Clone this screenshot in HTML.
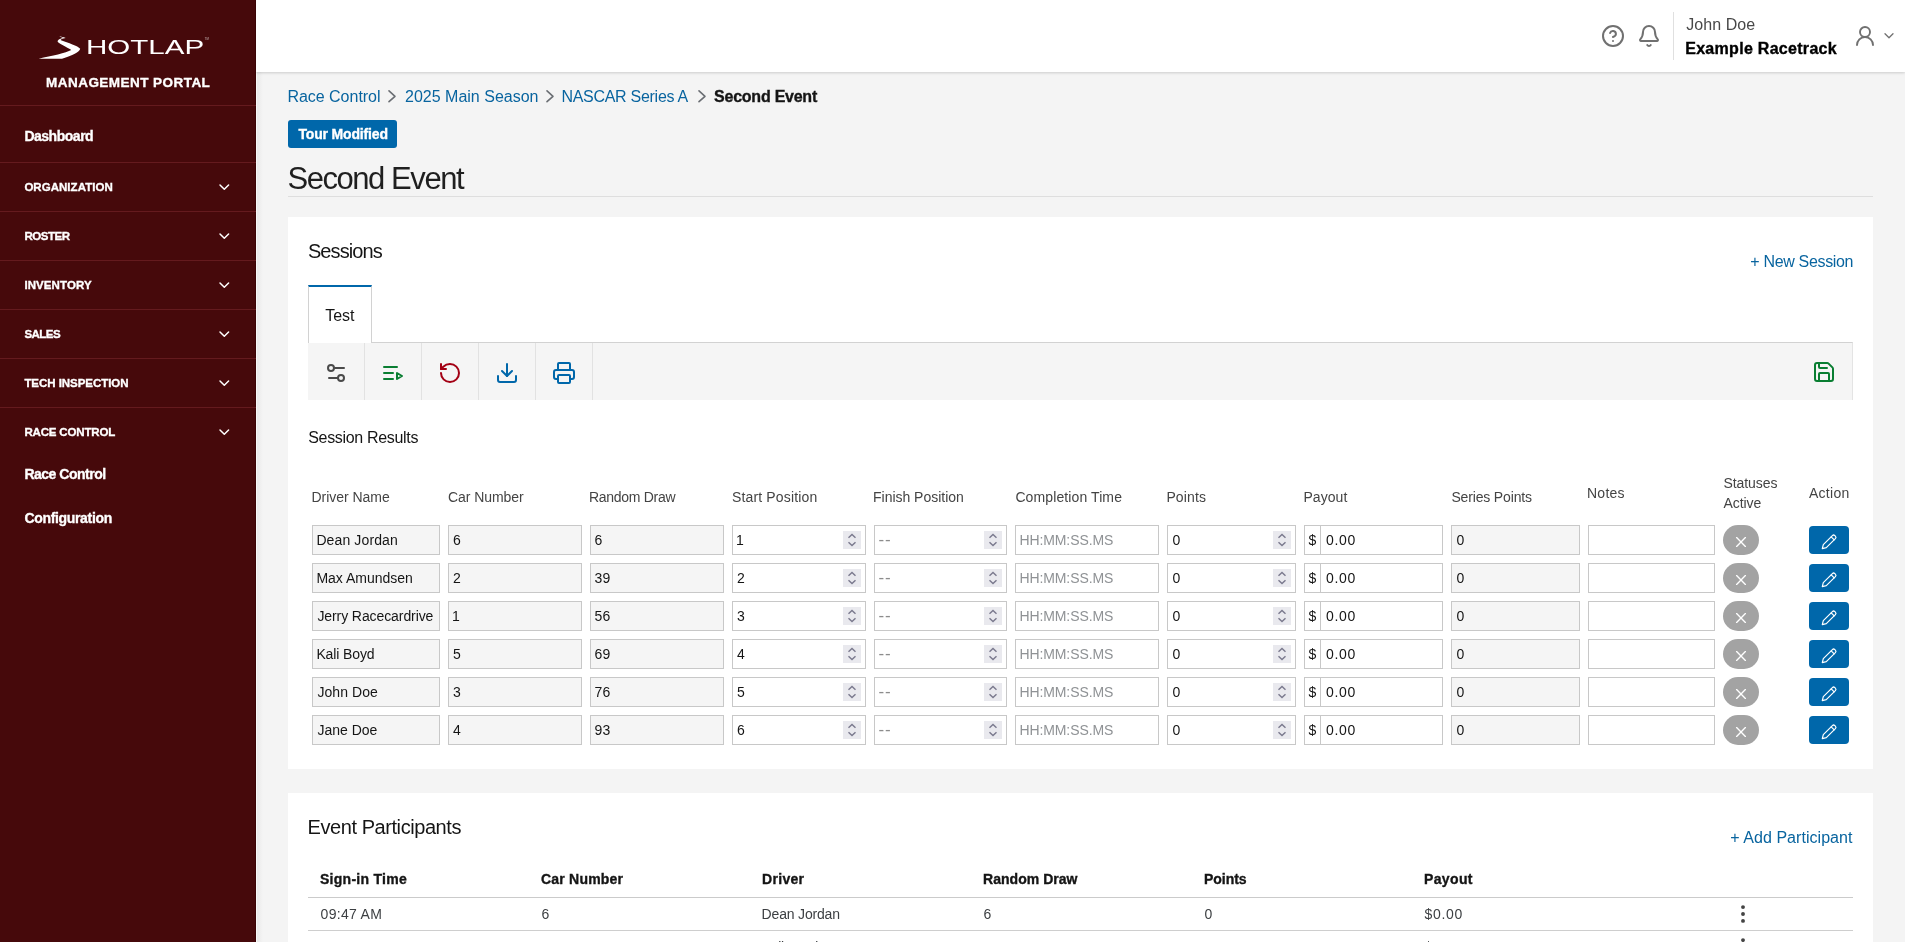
<!DOCTYPE html>
<html lang="en">
<head>
<meta charset="utf-8">
<title>Second Event - Hotlap Management Portal</title>
<style>
*{box-sizing:border-box;margin:0;padding:0}
html,body{width:1905px;height:942px;overflow:hidden;background:#f4f4f4;will-change:transform;font-family:"Liberation Sans",sans-serif;color:#151515}
.t{position:absolute;white-space:nowrap}
.a{position:absolute}
svg{position:absolute;overflow:visible}
#side{position:absolute;left:0;top:0;width:256px;height:942px;background:#46090b;box-shadow:inset -1px 0 0 #3a0305}
#side .t{color:#fff}
.hr{position:absolute;left:0;width:256px;height:1px;background:#641a1e}
#top{position:absolute;left:256px;top:0;width:1649px;height:72px;background:#fff;box-shadow:0 1px 2px rgba(0,0,0,.11),0 2px 3px rgba(0,0,0,.04)}
.card{position:absolute;left:288px;width:1585px;background:#fff}
.link{color:#08649f}
.in{position:absolute;height:30px;border:1px solid #c8c8c8;border-radius:0;background:#fff}
.in.dis{background:#f5f5f5}
.spin{position:absolute;width:18px;height:18px;top:5px;background:#e9e9ee}
.st{position:absolute;width:36px;height:30px;border-radius:15px;background:#a3a3a3}
.act{position:absolute;width:40px;height:28px;border-radius:4px;background:#0067aa}
.h{color:#444}
.ph{color:#8f9295}
.xb{-webkit-text-stroke:.35px currentColor}
</style>
</head>
<body>
<div class="a" style="left:256px;top:72px;width:7px;height:870px;background:linear-gradient(to right,#f7f8f8 0,#f7f8f8 1px,#e9e9e9 1px,#f4f4f4 7px)"></div>
<div id="top"></div>
<svg style="left:1600.8px;top:23.7px" width="24" height="24" viewBox="0 0 24 24" fill="none" stroke="#707070" stroke-width="2" stroke-linecap="round" stroke-linejoin="round"><circle cx="12" cy="12" r="10"/><path d="M9.090 9a3 3 0 0 1 5.830 1c0 2-3 3-3 3"/><path d="M12 17h.010"/></svg>
<svg style="left:1637.1px;top:24.4px" width="24" height="24" viewBox="0 0 24 24" fill="none" stroke="#707070" stroke-width="2" stroke-linecap="round" stroke-linejoin="round"><path d="M10.268 21a2 2 0 0 0 3.464 0"/><path d="M3.262 15.326A1 1 0 0 0 4 17h16a1 1 0 0 0 .740-1.673C19.410 13.956 18 12.499 18 8A6 6 0 0 0 6 8c0 4.499-1.411 5.956-2.738 7.326"/></svg>
<div class="a" style="left:1673px;top:12px;width:1px;height:48px;background:#e0e0e0"></div>
<div id="t1" class="t " style="top:14.36px;font-size:16px;line-height:21px;left:1686.20px;color:#484848;letter-spacing:0.072px;">John Doe</div>
<div id="t2" class="t xb" style="top:38.16px;font-size:16px;line-height:21px;left:1685.20px;font-weight:700;color:#000;letter-spacing:0.296px;">Example Racetrack</div>
<svg style="left:1853px;top:24px" width="24" height="24" viewBox="0 0 24 24" fill="none" stroke="#707070" stroke-width="1.9" stroke-linecap="round" stroke-linejoin="round"><circle cx="12" cy="8" r="5"/><path d="M20 21a8 8 0 0 0-16 0"/></svg>
<svg style="left:1884px;top:33px" width="10" height="6" viewBox="0 0 10 6" fill="none" stroke="#707070" stroke-width="1.300" stroke-linecap="round" stroke-linejoin="round"><path d="M1 .8l4 4 4-4"/></svg>
<div id="side">
<svg style="left:0;top:0" width="256" height="105" viewBox="0 0 256 105"><path fill="#fff" d="M38.6 58.7L62 58.7C72.500 55.600 79.600 52.300 80.200 48.800C78 45.800 68 43 61 40.300C59.800 39.500 62.600 38.300 65.700 37.900C63.200 36.900 61 36.400 59.200 36.400C61.400 37.100 63.200 37.600 62.600 38.100C58.200 39.300 56.600 41.100 58.400 42.600C63 45.800 68.800 48.200 71.300 50.100C66 53 52 56 38.600 58.700Z"/></svg>
<div id="brand" class="t" style="left:85.6px;top:34px;font-size:19.5px;line-height:26px;transform-origin:0 50%;transform:scaleX(1.515);color:#fff">HOTLAP</div>
<div class="t" style="left:204.8px;top:38px;font-size:2.8px;line-height:3px;color:#cdbcbc;letter-spacing:.1px">TM</div>
<div id="t3" class="t xb" style="top:74.32px;font-size:13.5px;line-height:18px;left:46.10px;font-weight:700;letter-spacing:0.454px;">MANAGEMENT PORTAL</div>
<div class="hr" style="top:105px"></div>
<div class="hr" style="top:162px"></div>
<div class="hr" style="top:211px"></div>
<div class="hr" style="top:260px"></div>
<div class="hr" style="top:309px"></div>
<div class="hr" style="top:358px"></div>
<div class="hr" style="top:407px"></div>
<div id="t4" class="t xb" style="top:126.75px;font-size:14px;line-height:18px;left:24.40px;font-weight:700;letter-spacing:-0.484px;">Dashboard</div>
<div id="t5" class="t xb" style="top:179.52px;font-size:11.5px;line-height:15px;left:24.40px;font-weight:700;letter-spacing:0.033px;">ORGANIZATION</div>
<svg style="left:219px;top:183.8px" width="11" height="7" viewBox="0 0 11 7" fill="none" stroke="#fff" stroke-width="1.500" stroke-linecap="round" stroke-linejoin="round"><path d="M1 1l4.300 4.300L9.600 1"/></svg>
<div id="t6" class="t xb" style="top:228.52px;font-size:11.5px;line-height:15px;left:24.40px;font-weight:700;letter-spacing:-0.443px;">ROSTER</div>
<svg style="left:219px;top:232.8px" width="11" height="7" viewBox="0 0 11 7" fill="none" stroke="#fff" stroke-width="1.500" stroke-linecap="round" stroke-linejoin="round"><path d="M1 1l4.300 4.300L9.600 1"/></svg>
<div id="t7" class="t xb" style="top:277.52px;font-size:11.5px;line-height:15px;left:24.40px;font-weight:700;letter-spacing:0.089px;">INVENTORY</div>
<svg style="left:219px;top:281.8px" width="11" height="7" viewBox="0 0 11 7" fill="none" stroke="#fff" stroke-width="1.500" stroke-linecap="round" stroke-linejoin="round"><path d="M1 1l4.300 4.300L9.600 1"/></svg>
<div id="t8" class="t xb" style="top:326.52px;font-size:11.5px;line-height:15px;left:24.40px;font-weight:700;letter-spacing:-0.518px;">SALES</div>
<svg style="left:219px;top:330.8px" width="11" height="7" viewBox="0 0 11 7" fill="none" stroke="#fff" stroke-width="1.500" stroke-linecap="round" stroke-linejoin="round"><path d="M1 1l4.300 4.300L9.600 1"/></svg>
<div id="t9" class="t xb" style="top:375.52px;font-size:11.5px;line-height:15px;left:24.40px;font-weight:700;letter-spacing:-0.049px;">TECH INSPECTION</div>
<svg style="left:219px;top:379.8px" width="11" height="7" viewBox="0 0 11 7" fill="none" stroke="#fff" stroke-width="1.500" stroke-linecap="round" stroke-linejoin="round"><path d="M1 1l4.300 4.300L9.600 1"/></svg>
<div id="t10" class="t xb" style="top:424.52px;font-size:11.5px;line-height:15px;left:24.40px;font-weight:700;letter-spacing:-0.165px;">RACE CONTROL</div>
<svg style="left:219px;top:428.8px" width="11" height="7" viewBox="0 0 11 7" fill="none" stroke="#fff" stroke-width="1.500" stroke-linecap="round" stroke-linejoin="round"><path d="M1 1l4.300 4.300L9.600 1"/></svg>
<div id="t11" class="t xb" style="top:464.95px;font-size:14px;line-height:18px;left:24.40px;font-weight:700;letter-spacing:-0.485px;">Race Control</div>
<div id="t12" class="t xb" style="top:509.15px;font-size:14px;line-height:18px;left:24.40px;font-weight:700;letter-spacing:-0.326px;">Configuration</div>
</div>
<div id="t13" class="t link" style="top:85.96px;font-size:16px;line-height:21px;left:287.40px;letter-spacing:-0.020px;">Race Control</div>
<svg style="left:388px;top:90.400px" width="8" height="13" viewBox="0 0 8 13" fill="none" stroke="#6a6e73" stroke-width="1.600" stroke-linecap="round" stroke-linejoin="round"><path d="M1 .9l6 5.400-6 5.400"/></svg>
<div id="t14" class="t link" style="top:85.96px;font-size:16px;line-height:21px;left:405.00px;letter-spacing:0.005px;">2025 Main Season</div>
<svg style="left:546px;top:90.400px" width="8" height="13" viewBox="0 0 8 13" fill="none" stroke="#6a6e73" stroke-width="1.600" stroke-linecap="round" stroke-linejoin="round"><path d="M1 .9l6 5.400-6 5.400"/></svg>
<div id="t15" class="t link" style="top:85.96px;font-size:16px;line-height:21px;left:561.40px;letter-spacing:-0.280px;">NASCAR Series A</div>
<svg style="left:698px;top:90.400px" width="8" height="13" viewBox="0 0 8 13" fill="none" stroke="#6a6e73" stroke-width="1.600" stroke-linecap="round" stroke-linejoin="round"><path d="M1 .9l6 5.400-6 5.400"/></svg>
<div id="t16" class="t xb" style="top:85.96px;font-size:16px;line-height:21px;left:714.10px;font-weight:700;letter-spacing:-0.243px;">Second Event</div>
<div class="a" style="left:288px;top:120px;width:109px;height:28px;border-radius:3px;background:#0067aa"></div>
<div id="t17" class="t xb" style="top:125.15px;font-size:14px;line-height:18px;left:298.40px;font-weight:700;color:#fff;letter-spacing:-0.162px;">Tour Modified</div>
<div id="t18" class="t " style="top:158.66px;font-size:31px;line-height:40px;left:287.40px;color:#1f1f1f;letter-spacing:-1.437px;">Second Event</div>
<div class="a" style="left:288px;top:196px;width:1585px;height:1px;background:#dedede"></div>
<div class="card" style="top:217px;height:552px"></div>
<div id="t19" class="t " style="top:238.07px;font-size:20px;line-height:26px;left:307.90px;letter-spacing:-0.907px;">Sessions</div>
<div id="t20" class="t link" style="top:251.16px;font-size:16px;line-height:21px;right:51.83px;letter-spacing:-0.330px;">+ New Session</div>
<div class="a" style="left:308px;top:285px;width:64px;height:58px;border:1px solid #d2d2d2;border-top:2px solid #0067aa;border-bottom:0;background:#fff"></div>
<div id="t21" class="t " style="top:305.06px;font-size:16px;line-height:21px;left:325.20px;letter-spacing:-0.033px;">Test</div>
<div class="a" style="left:308px;top:342px;width:1545px;height:58px;background:#f5f5f5;border-top:1px solid #d2d2d2;border-right:1px solid #e4e4e4"></div>
<div class="a" style="left:309px;top:342px;width:62px;height:1px;background:#fff"></div>
<div class="a" style="left:364px;top:343px;width:1px;height:57px;background:#e2e2e2"></div>
<div class="a" style="left:421px;top:343px;width:1px;height:57px;background:#e2e2e2"></div>
<div class="a" style="left:478px;top:343px;width:1px;height:57px;background:#e2e2e2"></div>
<div class="a" style="left:535px;top:343px;width:1px;height:57px;background:#e2e2e2"></div>
<div class="a" style="left:592px;top:343px;width:1px;height:57px;background:#e2e2e2"></div>
<svg style="left:324px;top:361px" width="24" height="24" viewBox="0 0 24 24" fill="none" stroke="#4a4a4a" stroke-width="2" stroke-linecap="round" stroke-linejoin="round"><path d="M20 7h-9"/><path d="M14 17H5"/><circle cx="17" cy="17" r="3"/><circle cx="7" cy="7" r="3"/></svg>
<svg style="left:381px;top:361px" width="24" height="24" viewBox="0 0 24 24" fill="none" stroke="#0a7e32" stroke-width="2" stroke-linecap="round" stroke-linejoin="round"><path d="M12 12H3"/><path d="M16 6H3"/><path d="M12 18H3"/><path d="m16 12 5 3-5 3v-6Z"/></svg>
<svg style="left:438px;top:361px" width="24" height="24" viewBox="0 0 24 24" fill="none" stroke="#a30014" stroke-width="2" stroke-linecap="round" stroke-linejoin="round"><path d="M3 12a9 9 0 1 0 9-9 9.750 9.750 0 0 0-6.740 2.740L3 8"/><path d="M3 3v5h5"/></svg>
<svg style="left:495px;top:361px" width="24" height="24" viewBox="0 0 24 24" fill="none" stroke="#0067aa" stroke-width="2" stroke-linecap="round" stroke-linejoin="round"><path d="M21 15v4a2 2 0 0 1-2 2H5a2 2 0 0 1-2-2v-4"/><path d="M7 10l5 5 5-5"/><path d="M12 15V3"/></svg>
<svg style="left:552px;top:361px" width="24" height="24" viewBox="0 0 24 24" fill="none" stroke="#0067aa" stroke-width="2" stroke-linecap="round" stroke-linejoin="round"><path d="M6 18H4a2 2 0 0 1-2-2v-5a2 2 0 0 1 2-2h16a2 2 0 0 1 2 2v5a2 2 0 0 1-2 2h-2"/><path d="M6 9V3a1 1 0 0 1 1-1h10a1 1 0 0 1 1 1v6"/><rect x="6" y="14" width="12" height="8" rx="1"/></svg>
<svg style="left:1812px;top:360px" width="24" height="24" viewBox="0 0 24 24" fill="none" stroke="#0a7e32" stroke-width="2" stroke-linecap="round" stroke-linejoin="round"><path d="M15.200 3a2 2 0 0 1 1.400.600l3.800 3.800a2 2 0 0 1 .600 1.400V19a2 2 0 0 1-2 2H5a2 2 0 0 1-2-2V5a2 2 0 0 1 2-2z"/><path d="M17 21v-7a1 1 0 0 0-1-1H8a1 1 0 0 0-1 1v7"/><path d="M7 3v4a1 1 0 0 0 1 1h7"/></svg>
<div id="t22" class="t " style="top:426.86px;font-size:16px;line-height:21px;left:308.20px;letter-spacing:-0.316px;">Session Results</div>
<div id="t23" class="t h" style="top:488.15px;font-size:14px;line-height:18px;left:311.40px;letter-spacing:-0.018px;">Driver Name</div>
<div id="t24" class="t h" style="top:488.15px;font-size:14px;line-height:18px;left:448.00px;letter-spacing:-0.064px;">Car Number</div>
<div id="t25" class="t h" style="top:488.15px;font-size:14px;line-height:18px;left:589.00px;letter-spacing:-0.297px;">Random Draw</div>
<div id="t26" class="t h" style="top:488.15px;font-size:14px;line-height:18px;left:732.00px;letter-spacing:0.148px;">Start Position</div>
<div id="t27" class="t h" style="top:488.15px;font-size:14px;line-height:18px;left:873.00px;letter-spacing:-0.018px;">Finish Position</div>
<div id="t28" class="t h" style="top:488.15px;font-size:14px;line-height:18px;left:1015.40px;letter-spacing:0.107px;">Completion Time</div>
<div id="t29" class="t h" style="top:488.15px;font-size:14px;line-height:18px;left:1166.40px;letter-spacing:0.138px;">Points</div>
<div id="t30" class="t h" style="top:488.15px;font-size:14px;line-height:18px;left:1303.40px;letter-spacing:0.061px;">Payout</div>
<div id="t31" class="t h" style="top:488.15px;font-size:14px;line-height:18px;left:1451.40px;letter-spacing:-0.157px;">Series Points</div>
<div id="t32" class="t h" style="top:484.15px;font-size:14px;line-height:18px;left:1587.00px;letter-spacing:0.257px;">Notes</div>
<div id="t33" class="t h" style="top:474.15px;font-size:14px;line-height:18px;left:1723.40px;letter-spacing:-0.068px;">Statuses</div>
<div id="t34" class="t h" style="top:494.15px;font-size:14px;line-height:18px;left:1723.40px;letter-spacing:-0.028px;">Active</div>
<div id="t35" class="t h" style="top:484.15px;font-size:14px;line-height:18px;left:1808.90px;letter-spacing:0.295px;">Action</div>
<div class="in dis" style="left:312px;top:525px;width:128px"></div>
<div id="t36" class="t " style="top:531.15px;font-size:14px;line-height:18px;left:316.40px;letter-spacing:0.122px;">Dean Jordan</div>
<div class="in dis" style="left:448px;top:525px;width:134px"></div>
<div id="t37" class="t " style="top:531.15px;font-size:14px;line-height:18px;left:453.00px;">6</div>
<div class="in dis" style="left:590px;top:525px;width:134px"></div>
<div id="t38" class="t " style="top:531.15px;font-size:14px;line-height:18px;left:594.60px;">6</div>
<div class="in" style="left:732px;top:525px;width:134px"><div class="spin" style="left:110px"><svg style="left:5px;top:2px" width="8" height="14" viewBox="0 0 8 14" fill="none" stroke="#7b7a8e" stroke-width="1.450" stroke-linejoin="miter"><path d="M.5 4.700L4 1.400l3.500 3.300"/><path d="M.5 9.300L4 12.600l3.500-3.300"/></svg></div></div>
<div id="t39" class="t " style="top:531.15px;font-size:14px;line-height:18px;left:736.00px;">1</div>
<div class="in" style="left:874px;top:525px;width:133px"><div class="spin" style="left:109px"><svg style="left:5px;top:2px" width="8" height="14" viewBox="0 0 8 14" fill="none" stroke="#7b7a8e" stroke-width="1.450" stroke-linejoin="miter"><path d="M.5 4.700L4 1.400l3.500 3.300"/><path d="M.5 9.300L4 12.600l3.500-3.300"/></svg></div></div>
<div id="t40" class="t ph" style="top:528.91px;font-size:17px;line-height:22px;left:878.60px;color:#8c8c8c;letter-spacing:0.739px;">--</div>
<div class="in" style="left:1015px;top:525px;width:144px"></div>
<div id="t41" class="t ph" style="top:531.15px;font-size:14px;line-height:18px;left:1019.40px;letter-spacing:-0.095px;">HH:MM:SS.MS</div>
<div class="in" style="left:1167px;top:525px;width:129px"><div class="spin" style="left:105px"><svg style="left:5px;top:2px" width="8" height="14" viewBox="0 0 8 14" fill="none" stroke="#7b7a8e" stroke-width="1.450" stroke-linejoin="miter"><path d="M.5 4.700L4 1.400l3.500 3.300"/><path d="M.5 9.300L4 12.600l3.500-3.300"/></svg></div></div>
<div id="t42" class="t " style="top:531.15px;font-size:14px;line-height:18px;left:1172.60px;">0</div>
<div class="in" style="left:1304px;top:525px;width:139px"><div class="a" style="left:15px;top:0;width:1px;height:28px;background:#c8c8c8"></div></div>
<div id="t43" class="t " style="top:531.15px;font-size:14px;line-height:18px;left:1308.60px;">$</div>
<div id="t44" class="t " style="top:531.15px;font-size:14px;line-height:18px;left:1326.00px;letter-spacing:0.646px;">0.00</div>
<div class="in dis" style="left:1451px;top:525px;width:129px"></div>
<div id="t45" class="t " style="top:531.15px;font-size:14px;line-height:18px;left:1456.60px;">0</div>
<div class="in" style="left:1588px;top:525px;width:127px"></div>
<div class="st" style="left:1723px;top:525px"><svg style="left:13px;top:12.200px" width="10" height="10" viewBox="0 0 10 10" fill="none" stroke="#fff" stroke-width="1.350" stroke-linecap="round"><path d="M.6.600l8.800 8.800M9.400.600L.6 9.400"/></svg></div>
<div class="act" style="left:1809px;top:526px"><svg style="left:12px;top:8px" width="16" height="16" viewBox="0 0 16 16" fill="none" stroke="#fff" stroke-width="1.200" stroke-linecap="round" stroke-linejoin="round"><path d="M1.300 14.700l1-4L11.400 1.600a1.700 1.700 0 0 1 2.400 0l.6.600a1.700 1.700 0 0 1 0 2.400L5.300 13.700z"/><path d="M10.200 2.800l3 3"/></svg></div>
<div class="in dis" style="left:312px;top:563px;width:128px"></div>
<div id="t46" class="t " style="top:569.15px;font-size:14px;line-height:18px;left:316.40px;letter-spacing:-0.007px;">Max Amundsen</div>
<div class="in dis" style="left:448px;top:563px;width:134px"></div>
<div id="t47" class="t " style="top:569.15px;font-size:14px;line-height:18px;left:453.00px;">2</div>
<div class="in dis" style="left:590px;top:563px;width:134px"></div>
<div id="t48" class="t " style="top:569.15px;font-size:14px;line-height:18px;left:594.60px;">39</div>
<div class="in" style="left:732px;top:563px;width:134px"><div class="spin" style="left:110px"><svg style="left:5px;top:2px" width="8" height="14" viewBox="0 0 8 14" fill="none" stroke="#7b7a8e" stroke-width="1.450" stroke-linejoin="miter"><path d="M.5 4.700L4 1.400l3.500 3.300"/><path d="M.5 9.300L4 12.600l3.500-3.300"/></svg></div></div>
<div id="t49" class="t " style="top:569.15px;font-size:14px;line-height:18px;left:737.00px;">2</div>
<div class="in" style="left:874px;top:563px;width:133px"><div class="spin" style="left:109px"><svg style="left:5px;top:2px" width="8" height="14" viewBox="0 0 8 14" fill="none" stroke="#7b7a8e" stroke-width="1.450" stroke-linejoin="miter"><path d="M.5 4.700L4 1.400l3.500 3.300"/><path d="M.5 9.300L4 12.600l3.500-3.300"/></svg></div></div>
<div id="t50" class="t ph" style="top:566.91px;font-size:17px;line-height:22px;left:878.60px;color:#8c8c8c;letter-spacing:0.739px;">--</div>
<div class="in" style="left:1015px;top:563px;width:144px"></div>
<div id="t51" class="t ph" style="top:569.15px;font-size:14px;line-height:18px;left:1019.40px;letter-spacing:-0.095px;">HH:MM:SS.MS</div>
<div class="in" style="left:1167px;top:563px;width:129px"><div class="spin" style="left:105px"><svg style="left:5px;top:2px" width="8" height="14" viewBox="0 0 8 14" fill="none" stroke="#7b7a8e" stroke-width="1.450" stroke-linejoin="miter"><path d="M.5 4.700L4 1.400l3.500 3.300"/><path d="M.5 9.300L4 12.600l3.500-3.300"/></svg></div></div>
<div id="t52" class="t " style="top:569.15px;font-size:14px;line-height:18px;left:1172.60px;">0</div>
<div class="in" style="left:1304px;top:563px;width:139px"><div class="a" style="left:15px;top:0;width:1px;height:28px;background:#c8c8c8"></div></div>
<div id="t53" class="t " style="top:569.15px;font-size:14px;line-height:18px;left:1308.60px;">$</div>
<div id="t54" class="t " style="top:569.15px;font-size:14px;line-height:18px;left:1326.00px;letter-spacing:0.646px;">0.00</div>
<div class="in dis" style="left:1451px;top:563px;width:129px"></div>
<div id="t55" class="t " style="top:569.15px;font-size:14px;line-height:18px;left:1456.60px;">0</div>
<div class="in" style="left:1588px;top:563px;width:127px"></div>
<div class="st" style="left:1723px;top:563px"><svg style="left:13px;top:12.200px" width="10" height="10" viewBox="0 0 10 10" fill="none" stroke="#fff" stroke-width="1.350" stroke-linecap="round"><path d="M.6.600l8.800 8.800M9.400.600L.6 9.400"/></svg></div>
<div class="act" style="left:1809px;top:564px"><svg style="left:12px;top:8px" width="16" height="16" viewBox="0 0 16 16" fill="none" stroke="#fff" stroke-width="1.200" stroke-linecap="round" stroke-linejoin="round"><path d="M1.300 14.700l1-4L11.400 1.600a1.700 1.700 0 0 1 2.400 0l.6.600a1.700 1.700 0 0 1 0 2.400L5.300 13.700z"/><path d="M10.200 2.800l3 3"/></svg></div>
<div class="in dis" style="left:312px;top:601px;width:128px"></div>
<div id="t56" class="t " style="top:607.15px;font-size:14px;line-height:18px;left:317.40px;letter-spacing:-0.088px;">Jerry Racecardrive</div>
<div class="in dis" style="left:448px;top:601px;width:134px"></div>
<div id="t57" class="t " style="top:607.15px;font-size:14px;line-height:18px;left:452.00px;">1</div>
<div class="in dis" style="left:590px;top:601px;width:134px"></div>
<div id="t58" class="t " style="top:607.15px;font-size:14px;line-height:18px;left:594.60px;">56</div>
<div class="in" style="left:732px;top:601px;width:134px"><div class="spin" style="left:110px"><svg style="left:5px;top:2px" width="8" height="14" viewBox="0 0 8 14" fill="none" stroke="#7b7a8e" stroke-width="1.450" stroke-linejoin="miter"><path d="M.5 4.700L4 1.400l3.500 3.300"/><path d="M.5 9.300L4 12.600l3.500-3.300"/></svg></div></div>
<div id="t59" class="t " style="top:607.15px;font-size:14px;line-height:18px;left:737.00px;">3</div>
<div class="in" style="left:874px;top:601px;width:133px"><div class="spin" style="left:109px"><svg style="left:5px;top:2px" width="8" height="14" viewBox="0 0 8 14" fill="none" stroke="#7b7a8e" stroke-width="1.450" stroke-linejoin="miter"><path d="M.5 4.700L4 1.400l3.500 3.300"/><path d="M.5 9.300L4 12.600l3.500-3.300"/></svg></div></div>
<div id="t60" class="t ph" style="top:604.91px;font-size:17px;line-height:22px;left:878.60px;color:#8c8c8c;letter-spacing:0.739px;">--</div>
<div class="in" style="left:1015px;top:601px;width:144px"></div>
<div id="t61" class="t ph" style="top:607.15px;font-size:14px;line-height:18px;left:1019.40px;letter-spacing:-0.095px;">HH:MM:SS.MS</div>
<div class="in" style="left:1167px;top:601px;width:129px"><div class="spin" style="left:105px"><svg style="left:5px;top:2px" width="8" height="14" viewBox="0 0 8 14" fill="none" stroke="#7b7a8e" stroke-width="1.450" stroke-linejoin="miter"><path d="M.5 4.700L4 1.400l3.500 3.300"/><path d="M.5 9.300L4 12.600l3.500-3.300"/></svg></div></div>
<div id="t62" class="t " style="top:607.15px;font-size:14px;line-height:18px;left:1172.60px;">0</div>
<div class="in" style="left:1304px;top:601px;width:139px"><div class="a" style="left:15px;top:0;width:1px;height:28px;background:#c8c8c8"></div></div>
<div id="t63" class="t " style="top:607.15px;font-size:14px;line-height:18px;left:1308.60px;">$</div>
<div id="t64" class="t " style="top:607.15px;font-size:14px;line-height:18px;left:1326.00px;letter-spacing:0.646px;">0.00</div>
<div class="in dis" style="left:1451px;top:601px;width:129px"></div>
<div id="t65" class="t " style="top:607.15px;font-size:14px;line-height:18px;left:1456.60px;">0</div>
<div class="in" style="left:1588px;top:601px;width:127px"></div>
<div class="st" style="left:1723px;top:601px"><svg style="left:13px;top:12.200px" width="10" height="10" viewBox="0 0 10 10" fill="none" stroke="#fff" stroke-width="1.350" stroke-linecap="round"><path d="M.6.600l8.800 8.800M9.400.600L.6 9.400"/></svg></div>
<div class="act" style="left:1809px;top:602px"><svg style="left:12px;top:8px" width="16" height="16" viewBox="0 0 16 16" fill="none" stroke="#fff" stroke-width="1.200" stroke-linecap="round" stroke-linejoin="round"><path d="M1.300 14.700l1-4L11.400 1.600a1.700 1.700 0 0 1 2.400 0l.6.600a1.700 1.700 0 0 1 0 2.400L5.300 13.700z"/><path d="M10.200 2.800l3 3"/></svg></div>
<div class="in dis" style="left:312px;top:639px;width:128px"></div>
<div id="t66" class="t " style="top:645.15px;font-size:14px;line-height:18px;left:316.40px;letter-spacing:-0.120px;">Kali Boyd</div>
<div class="in dis" style="left:448px;top:639px;width:134px"></div>
<div id="t67" class="t " style="top:645.15px;font-size:14px;line-height:18px;left:453.00px;">5</div>
<div class="in dis" style="left:590px;top:639px;width:134px"></div>
<div id="t68" class="t " style="top:645.15px;font-size:14px;line-height:18px;left:594.60px;">69</div>
<div class="in" style="left:732px;top:639px;width:134px"><div class="spin" style="left:110px"><svg style="left:5px;top:2px" width="8" height="14" viewBox="0 0 8 14" fill="none" stroke="#7b7a8e" stroke-width="1.450" stroke-linejoin="miter"><path d="M.5 4.700L4 1.400l3.500 3.300"/><path d="M.5 9.300L4 12.600l3.500-3.300"/></svg></div></div>
<div id="t69" class="t " style="top:645.15px;font-size:14px;line-height:18px;left:737.00px;">4</div>
<div class="in" style="left:874px;top:639px;width:133px"><div class="spin" style="left:109px"><svg style="left:5px;top:2px" width="8" height="14" viewBox="0 0 8 14" fill="none" stroke="#7b7a8e" stroke-width="1.450" stroke-linejoin="miter"><path d="M.5 4.700L4 1.400l3.500 3.300"/><path d="M.5 9.300L4 12.600l3.500-3.300"/></svg></div></div>
<div id="t70" class="t ph" style="top:642.91px;font-size:17px;line-height:22px;left:878.60px;color:#8c8c8c;letter-spacing:0.739px;">--</div>
<div class="in" style="left:1015px;top:639px;width:144px"></div>
<div id="t71" class="t ph" style="top:645.15px;font-size:14px;line-height:18px;left:1019.40px;letter-spacing:-0.095px;">HH:MM:SS.MS</div>
<div class="in" style="left:1167px;top:639px;width:129px"><div class="spin" style="left:105px"><svg style="left:5px;top:2px" width="8" height="14" viewBox="0 0 8 14" fill="none" stroke="#7b7a8e" stroke-width="1.450" stroke-linejoin="miter"><path d="M.5 4.700L4 1.400l3.500 3.300"/><path d="M.5 9.300L4 12.600l3.500-3.300"/></svg></div></div>
<div id="t72" class="t " style="top:645.15px;font-size:14px;line-height:18px;left:1172.60px;">0</div>
<div class="in" style="left:1304px;top:639px;width:139px"><div class="a" style="left:15px;top:0;width:1px;height:28px;background:#c8c8c8"></div></div>
<div id="t73" class="t " style="top:645.15px;font-size:14px;line-height:18px;left:1308.60px;">$</div>
<div id="t74" class="t " style="top:645.15px;font-size:14px;line-height:18px;left:1326.00px;letter-spacing:0.646px;">0.00</div>
<div class="in dis" style="left:1451px;top:639px;width:129px"></div>
<div id="t75" class="t " style="top:645.15px;font-size:14px;line-height:18px;left:1456.60px;">0</div>
<div class="in" style="left:1588px;top:639px;width:127px"></div>
<div class="st" style="left:1723px;top:639px"><svg style="left:13px;top:12.200px" width="10" height="10" viewBox="0 0 10 10" fill="none" stroke="#fff" stroke-width="1.350" stroke-linecap="round"><path d="M.6.600l8.800 8.800M9.400.600L.6 9.400"/></svg></div>
<div class="act" style="left:1809px;top:640px"><svg style="left:12px;top:8px" width="16" height="16" viewBox="0 0 16 16" fill="none" stroke="#fff" stroke-width="1.200" stroke-linecap="round" stroke-linejoin="round"><path d="M1.300 14.700l1-4L11.400 1.600a1.700 1.700 0 0 1 2.400 0l.6.600a1.700 1.700 0 0 1 0 2.400L5.300 13.700z"/><path d="M10.200 2.800l3 3"/></svg></div>
<div class="in dis" style="left:312px;top:677px;width:128px"></div>
<div id="t76" class="t " style="top:683.15px;font-size:14px;line-height:18px;left:317.40px;letter-spacing:0.065px;">John Doe</div>
<div class="in dis" style="left:448px;top:677px;width:134px"></div>
<div id="t77" class="t " style="top:683.15px;font-size:14px;line-height:18px;left:453.00px;">3</div>
<div class="in dis" style="left:590px;top:677px;width:134px"></div>
<div id="t78" class="t " style="top:683.15px;font-size:14px;line-height:18px;left:594.60px;">76</div>
<div class="in" style="left:732px;top:677px;width:134px"><div class="spin" style="left:110px"><svg style="left:5px;top:2px" width="8" height="14" viewBox="0 0 8 14" fill="none" stroke="#7b7a8e" stroke-width="1.450" stroke-linejoin="miter"><path d="M.5 4.700L4 1.400l3.500 3.300"/><path d="M.5 9.300L4 12.600l3.500-3.300"/></svg></div></div>
<div id="t79" class="t " style="top:683.15px;font-size:14px;line-height:18px;left:737.00px;">5</div>
<div class="in" style="left:874px;top:677px;width:133px"><div class="spin" style="left:109px"><svg style="left:5px;top:2px" width="8" height="14" viewBox="0 0 8 14" fill="none" stroke="#7b7a8e" stroke-width="1.450" stroke-linejoin="miter"><path d="M.5 4.700L4 1.400l3.500 3.300"/><path d="M.5 9.300L4 12.600l3.500-3.300"/></svg></div></div>
<div id="t80" class="t ph" style="top:680.91px;font-size:17px;line-height:22px;left:878.60px;color:#8c8c8c;letter-spacing:0.739px;">--</div>
<div class="in" style="left:1015px;top:677px;width:144px"></div>
<div id="t81" class="t ph" style="top:683.15px;font-size:14px;line-height:18px;left:1019.40px;letter-spacing:-0.095px;">HH:MM:SS.MS</div>
<div class="in" style="left:1167px;top:677px;width:129px"><div class="spin" style="left:105px"><svg style="left:5px;top:2px" width="8" height="14" viewBox="0 0 8 14" fill="none" stroke="#7b7a8e" stroke-width="1.450" stroke-linejoin="miter"><path d="M.5 4.700L4 1.400l3.500 3.300"/><path d="M.5 9.300L4 12.600l3.500-3.300"/></svg></div></div>
<div id="t82" class="t " style="top:683.15px;font-size:14px;line-height:18px;left:1172.60px;">0</div>
<div class="in" style="left:1304px;top:677px;width:139px"><div class="a" style="left:15px;top:0;width:1px;height:28px;background:#c8c8c8"></div></div>
<div id="t83" class="t " style="top:683.15px;font-size:14px;line-height:18px;left:1308.60px;">$</div>
<div id="t84" class="t " style="top:683.15px;font-size:14px;line-height:18px;left:1326.00px;letter-spacing:0.646px;">0.00</div>
<div class="in dis" style="left:1451px;top:677px;width:129px"></div>
<div id="t85" class="t " style="top:683.15px;font-size:14px;line-height:18px;left:1456.60px;">0</div>
<div class="in" style="left:1588px;top:677px;width:127px"></div>
<div class="st" style="left:1723px;top:677px"><svg style="left:13px;top:12.200px" width="10" height="10" viewBox="0 0 10 10" fill="none" stroke="#fff" stroke-width="1.350" stroke-linecap="round"><path d="M.6.600l8.800 8.800M9.400.600L.6 9.400"/></svg></div>
<div class="act" style="left:1809px;top:678px"><svg style="left:12px;top:8px" width="16" height="16" viewBox="0 0 16 16" fill="none" stroke="#fff" stroke-width="1.200" stroke-linecap="round" stroke-linejoin="round"><path d="M1.300 14.700l1-4L11.400 1.600a1.700 1.700 0 0 1 2.400 0l.6.600a1.700 1.700 0 0 1 0 2.400L5.300 13.700z"/><path d="M10.200 2.800l3 3"/></svg></div>
<div class="in dis" style="left:312px;top:715px;width:128px"></div>
<div id="t86" class="t " style="top:721.15px;font-size:14px;line-height:18px;left:317.40px;letter-spacing:0.008px;">Jane Doe</div>
<div class="in dis" style="left:448px;top:715px;width:134px"></div>
<div id="t87" class="t " style="top:721.15px;font-size:14px;line-height:18px;left:453.00px;">4</div>
<div class="in dis" style="left:590px;top:715px;width:134px"></div>
<div id="t88" class="t " style="top:721.15px;font-size:14px;line-height:18px;left:594.60px;">93</div>
<div class="in" style="left:732px;top:715px;width:134px"><div class="spin" style="left:110px"><svg style="left:5px;top:2px" width="8" height="14" viewBox="0 0 8 14" fill="none" stroke="#7b7a8e" stroke-width="1.450" stroke-linejoin="miter"><path d="M.5 4.700L4 1.400l3.500 3.300"/><path d="M.5 9.300L4 12.600l3.500-3.300"/></svg></div></div>
<div id="t89" class="t " style="top:721.15px;font-size:14px;line-height:18px;left:737.00px;">6</div>
<div class="in" style="left:874px;top:715px;width:133px"><div class="spin" style="left:109px"><svg style="left:5px;top:2px" width="8" height="14" viewBox="0 0 8 14" fill="none" stroke="#7b7a8e" stroke-width="1.450" stroke-linejoin="miter"><path d="M.5 4.700L4 1.400l3.500 3.300"/><path d="M.5 9.300L4 12.600l3.500-3.300"/></svg></div></div>
<div id="t90" class="t ph" style="top:718.91px;font-size:17px;line-height:22px;left:878.60px;color:#8c8c8c;letter-spacing:0.739px;">--</div>
<div class="in" style="left:1015px;top:715px;width:144px"></div>
<div id="t91" class="t ph" style="top:721.15px;font-size:14px;line-height:18px;left:1019.40px;letter-spacing:-0.095px;">HH:MM:SS.MS</div>
<div class="in" style="left:1167px;top:715px;width:129px"><div class="spin" style="left:105px"><svg style="left:5px;top:2px" width="8" height="14" viewBox="0 0 8 14" fill="none" stroke="#7b7a8e" stroke-width="1.450" stroke-linejoin="miter"><path d="M.5 4.700L4 1.400l3.500 3.300"/><path d="M.5 9.300L4 12.600l3.500-3.300"/></svg></div></div>
<div id="t92" class="t " style="top:721.15px;font-size:14px;line-height:18px;left:1172.60px;">0</div>
<div class="in" style="left:1304px;top:715px;width:139px"><div class="a" style="left:15px;top:0;width:1px;height:28px;background:#c8c8c8"></div></div>
<div id="t93" class="t " style="top:721.15px;font-size:14px;line-height:18px;left:1308.60px;">$</div>
<div id="t94" class="t " style="top:721.15px;font-size:14px;line-height:18px;left:1326.00px;letter-spacing:0.646px;">0.00</div>
<div class="in dis" style="left:1451px;top:715px;width:129px"></div>
<div id="t95" class="t " style="top:721.15px;font-size:14px;line-height:18px;left:1456.60px;">0</div>
<div class="in" style="left:1588px;top:715px;width:127px"></div>
<div class="st" style="left:1723px;top:715px"><svg style="left:13px;top:12.200px" width="10" height="10" viewBox="0 0 10 10" fill="none" stroke="#fff" stroke-width="1.350" stroke-linecap="round"><path d="M.6.600l8.800 8.800M9.400.600L.6 9.400"/></svg></div>
<div class="act" style="left:1809px;top:716px"><svg style="left:12px;top:8px" width="16" height="16" viewBox="0 0 16 16" fill="none" stroke="#fff" stroke-width="1.200" stroke-linecap="round" stroke-linejoin="round"><path d="M1.300 14.700l1-4L11.400 1.600a1.700 1.700 0 0 1 2.400 0l.6.600a1.700 1.700 0 0 1 0 2.400L5.300 13.700z"/><path d="M10.200 2.800l3 3"/></svg></div>
<div class="card" style="top:793px;height:160px"></div>
<div id="t96" class="t " style="top:814.07px;font-size:20px;line-height:26px;left:307.60px;letter-spacing:-0.435px;">Event Participants</div>
<div id="t97" class="t link" style="top:827.16px;font-size:16px;line-height:21px;right:52.50px;letter-spacing:0.047px;">+ Add Participant</div>
<div id="t98" class="t xb" style="top:870.15px;font-size:14px;line-height:18px;left:320.00px;font-weight:700;letter-spacing:0.276px;">Sign-in Time</div>
<div id="t99" class="t xb" style="top:870.15px;font-size:14px;line-height:18px;left:541.00px;font-weight:700;letter-spacing:0.213px;">Car Number</div>
<div id="t100" class="t xb" style="top:870.15px;font-size:14px;line-height:18px;left:762.00px;font-weight:700;letter-spacing:0.316px;">Driver</div>
<div id="t101" class="t xb" style="top:870.15px;font-size:14px;line-height:18px;left:983.00px;font-weight:700;letter-spacing:0.037px;">Random Draw</div>
<div id="t102" class="t xb" style="top:870.15px;font-size:14px;line-height:18px;left:1204.00px;font-weight:700;letter-spacing:-0.039px;">Points</div>
<div id="t103" class="t xb" style="top:870.15px;font-size:14px;line-height:18px;left:1424.00px;font-weight:700;letter-spacing:0.357px;">Payout</div>
<div class="a" style="left:308px;top:897px;width:1545px;height:1px;background:#cbcbcb"></div>
<div id="t104" class="t " style="top:905.15px;font-size:14px;line-height:18px;left:320.60px;color:#3c3f42;letter-spacing:0.305px;">09:47 AM</div>
<div id="t105" class="t " style="top:905.15px;font-size:14px;line-height:18px;left:541.60px;color:#3c3f42;">6</div>
<div id="t106" class="t " style="top:905.15px;font-size:14px;line-height:18px;left:761.60px;color:#3c3f42;letter-spacing:-0.178px;">Dean Jordan</div>
<div id="t107" class="t " style="top:905.15px;font-size:14px;line-height:18px;left:983.60px;color:#3c3f42;">6</div>
<div id="t108" class="t " style="top:905.15px;font-size:14px;line-height:18px;left:1204.60px;color:#3c3f42;">0</div>
<div id="t109" class="t " style="top:905.15px;font-size:14px;line-height:18px;left:1424.60px;color:#3c3f42;letter-spacing:0.638px;">$0.00</div>
<svg style="left:1740px;top:905px" width="6" height="18" viewBox="0 0 6 18" fill="#444"><circle cx="3" cy="2.100" r="1.950"/><circle cx="3" cy="9" r="1.950"/><circle cx="3" cy="15.900" r="1.950"/></svg>
<div class="a" style="left:308px;top:930px;width:1545px;height:1px;background:#cecece"></div>
<div id="t110" class="t " style="top:937.95px;font-size:14px;line-height:18px;left:320.60px;color:#3c3f42;letter-spacing:0.305px;">09:47 AM</div>
<div id="t111" class="t " style="top:937.95px;font-size:14px;line-height:18px;left:541.60px;color:#3c3f42;">5</div>
<div id="t112" class="t " style="top:937.95px;font-size:14px;line-height:18px;left:761.60px;color:#3c3f42;letter-spacing:-0.295px;">Kali Boyd</div>
<div id="t113" class="t " style="top:937.95px;font-size:14px;line-height:18px;left:983.60px;color:#3c3f42;">69</div>
<div id="t114" class="t " style="top:937.95px;font-size:14px;line-height:18px;left:1204.60px;color:#3c3f42;">0</div>
<div id="t115" class="t " style="top:937.95px;font-size:14px;line-height:18px;left:1424.60px;color:#3c3f42;letter-spacing:0.638px;">$0.00</div>
<svg style="left:1740px;top:937.8px" width="6" height="18" viewBox="0 0 6 18" fill="#444"><circle cx="3" cy="2.100" r="1.950"/><circle cx="3" cy="9" r="1.950"/><circle cx="3" cy="15.900" r="1.950"/></svg>
</body>
</html>
